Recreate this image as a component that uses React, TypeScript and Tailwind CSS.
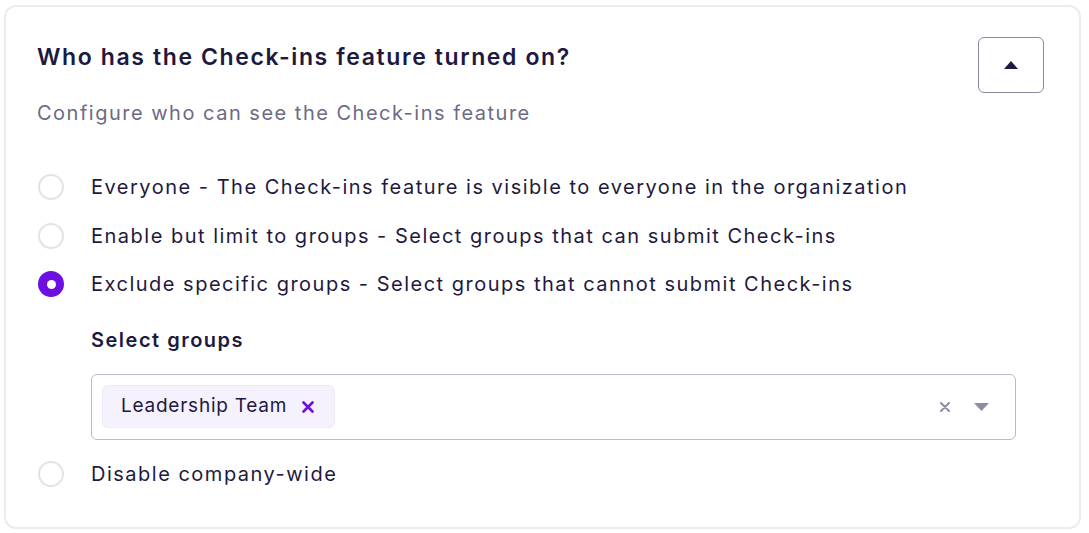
import { useState } from "react";

const options = [
  { id: "everyone", label: "Everyone - The Check-ins feature is visible to everyone in the organization" },
  { id: "limit", label: "Enable but limit to groups - Select groups that can submit Check-ins" },
  { id: "exclude", label: "Exclude specific groups - Select groups that cannot submit Check-ins" },
  { id: "disable", label: "Disable company-wide" },
];

function Radio({ checked }: { checked: boolean }) {
  return checked ? (
    <span className="flex h-[26px] w-[26px] shrink-0 items-center justify-center rounded-full bg-[#6c0fe0]">
      <span className="h-[9px] w-[9px] rounded-full bg-white" />
    </span>
  ) : (
    <span className="h-[26px] w-[26px] shrink-0 rounded-full border-2 border-[#e3e2e8] bg-white" />
  );
}

export default function App() {
  const [selected, setSelected] = useState("exclude");
  const [groups, setGroups] = useState(["Leadership Team"]);

  return (
    <div className="min-h-screen bg-white pl-[4px] pt-[5px] font-['Inter',sans-serif] text-[#1e1940]">
      <div className="w-[1077px] rounded-xl border-2 border-[#ececef] pb-[29px] pl-[31px] pr-[35px] pt-[28px]">
        {/* Header */}
        <div className="flex items-start justify-between">
          <h2 className="mt-[8px] text-[23px] font-semibold leading-[28px] tracking-[0.07em]">
            Who has the Check-ins feature turned on?
          </h2>
          <button className="mt-[2px] flex h-[56px] w-[66px] items-center justify-center rounded-md border border-[#8b88a3] bg-white">
            <svg width="14" height="8" viewBox="0 0 14 8">
              <path d="M7 0 L14 8 L0 8 Z" fill="#1e1940" />
            </svg>
          </button>
        </div>
        <p className="mt-[6px] text-[20px] leading-[28px] tracking-[0.075em] text-[#6d6a85]">
          Configure who can see the Check-ins feature
        </p>

        {/* Options */}
        <div className="mt-[36px] flex flex-col">
          {options.map((opt) => (
            <div key={opt.id}>
              <label
                className="flex h-[48.5px] cursor-pointer items-center gap-[27px] pl-[1px]"
                onClick={() => setSelected(opt.id)}
              >
                <Radio checked={selected === opt.id} />
                <span className="text-[20px] leading-[28px] tracking-[0.075em]">{opt.label}</span>
              </label>
              {opt.id === "exclude" && selected === "exclude" && (
                <div className="pl-[54px] pb-[10px]">
                  <div className="mt-[17px] text-[20px] font-semibold leading-[28px] tracking-[0.075em]">Select groups</div>
                  <div className="mt-[20px] flex h-[66px] w-[925px] items-center rounded-md border border-[#bbb9c8] pl-[10px] pr-[26px]">
                    <div className="flex flex-1 items-center gap-2">
                      {groups.map((g) => (
                        <span
                          key={g}
                          className="flex h-[43px] items-center gap-[15px] rounded-md border border-[#eeeafa] bg-[#f5f2fd] pl-[18px] pr-[20px] text-[19px] tracking-[0.04em]"
                        >
                          {g}
                          <svg
                            width="12"
                            height="12"
                            viewBox="0 0 12 12"
                            className="cursor-pointer"
                            onClick={() => setGroups(groups.filter((x) => x !== g))}
                          >
                            <path d="M1.5 1.5 L10.5 10.5 M10.5 1.5 L1.5 10.5" stroke="#6c0fe0" strokeWidth="2.6" strokeLinecap="round" />
                          </svg>
                        </span>
                      ))}
                    </div>
                    <div className="flex items-center gap-[24px]">
                      <svg width="10" height="10" viewBox="0 0 10 10">
                        <path d="M1 1 L9 9 M9 1 L1 9" stroke="#8f8ca3" strokeWidth="2" strokeLinecap="round" />
                      </svg>
                      <svg width="15" height="8" viewBox="0 0 15 8">
                        <path d="M0 0 L15 0 L7.5 8 Z" fill="#8f8ca3" />
                      </svg>
                    </div>
                  </div>
                </div>
              )}
            </div>
          ))}
        </div>
      </div>
    </div>
  );
}
